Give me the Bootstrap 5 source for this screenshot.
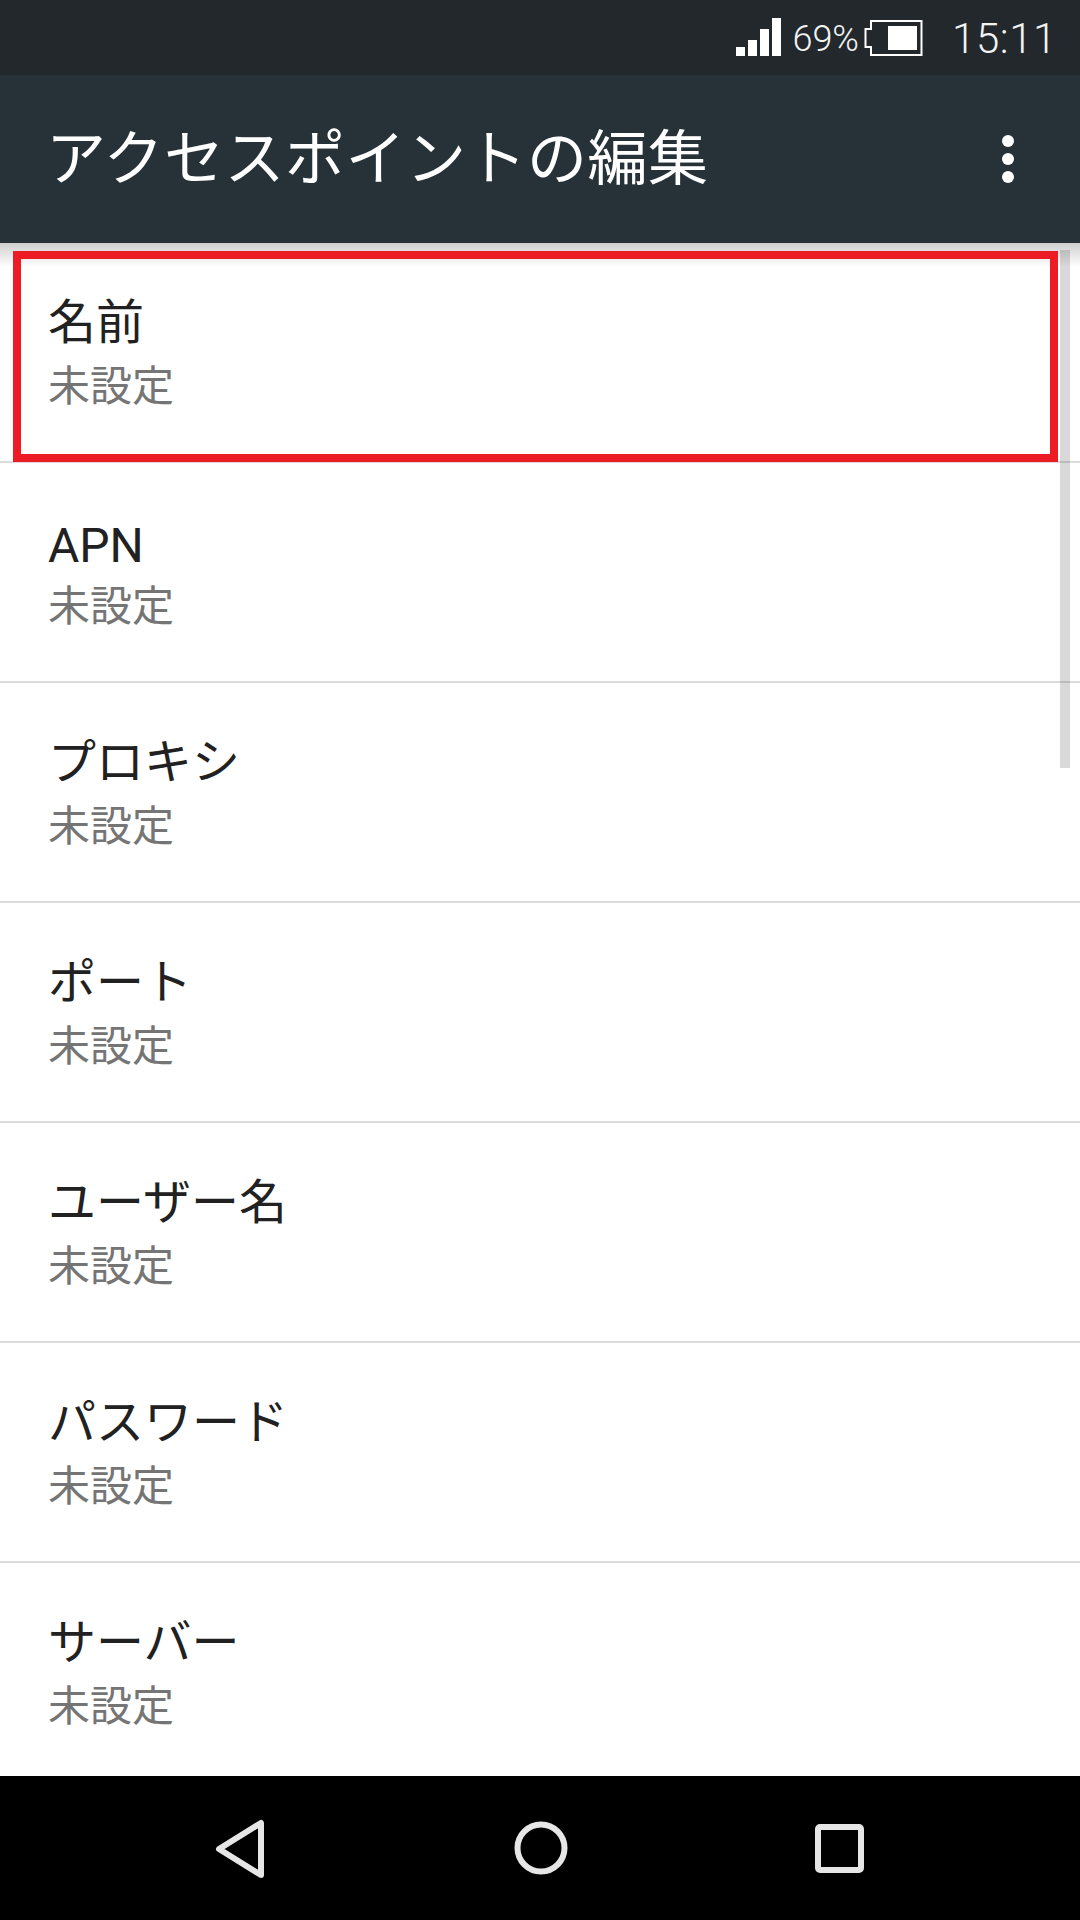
<!DOCTYPE html>
<html lang="ja">
<head>
<meta charset="utf-8">
<title>アクセスポイントの編集</title>
<link href="https://cdn.jsdelivr.net/npm/bootstrap@5.3.0/dist/css/bootstrap.min.css" rel="stylesheet">
<style>
html,body{margin:0;background:#fff}
.phone{width:1080px;height:1920px;overflow:hidden;font-family:"Roboto","Noto Sans CJK JP",sans-serif;}
.stat-bar{height:75px;background:#22282c;color:#f2f3f3;padding-right:23px}
.stat-bar svg{margin-top:1px}
.pct{font-size:36px;line-height:1;margin-left:10px;margin-right:5px;font-weight:300;padding-top:3px}
.clock{font-size:42px;line-height:1;margin-left:29px;letter-spacing:.6px;font-weight:300;padding-top:3px}
.tool-bar{height:168px;background:#263238;color:#fff;padding:0 66px 0 48px}
.tool-title{font-size:60px;font-weight:400;line-height:1;margin:-10px 0 0 -2px;letter-spacing:.5px;font-family:"Noto Sans CJK JP",sans-serif}
.dots{display:block}
.pref-list{position:relative;overflow:hidden}
.pref-list .list-group-item{height:220px;padding:47px 48px 0;border-color:#dcdcdc;border-width:0 0 2px;background:#fff}
.pref-name{font-size:48px;line-height:66px;color:#212121}
.pref-latin{height:66px;line-height:60px;padding-top:6px}
.pref-val{font-size:42px;line-height:61px;color:#757575}
.top-shade{position:absolute;left:0;right:0;top:0;height:24px;background:linear-gradient(#cfcfcf,rgba(255,255,255,0))}
.red-box{position:absolute;left:13px;top:8px;width:1045px;height:211px;border:8px solid #ed1c24}
.scroll-thumb{position:absolute;left:1060px;top:7px;width:10px;height:518px;background:rgba(0,0,0,.15)}
.nav-strip{height:144px;background:#000}
.nav-strip svg{position:absolute}
.nav-inner{position:relative;height:144px}
.ic-back{left:215px;top:43px}
.ic-home{left:513px;top:44px}
.ic-rec{left:814px;top:47px}
</style>
</head>
<body>
<div class="phone d-flex flex-column">
  <div class="stat-bar d-flex align-items-center justify-content-end flex-shrink-0">
    <svg width="46" height="40" viewBox="0 0 46 40" fill="#fff"><rect x="0" y="29" width="9" height="9"/><rect x="12" y="22" width="9" height="16"/><rect x="24" y="11" width="9" height="27"/><rect x="36" y="0" width="9" height="38"/></svg>
    <span class="pct">69%</span>
    <svg width="59" height="36" viewBox="0 0 59 36" fill="none"><path d="M7 1H57.500V35H7V27H1.500V9H7Z" stroke="#fff" stroke-width="2"/><rect x="24" y="6" width="29" height="24" fill="#fff"/></svg>
    <span class="clock">15:11</span>
  </div>
  <div class="tool-bar d-flex align-items-center justify-content-between flex-shrink-0">
    <h1 class="tool-title">アクセスポイントの編集</h1>
    <svg class="dots" width="12" height="48" viewBox="0 0 12 48" fill="#fff"><circle cx="6" cy="6" r="6"/><circle cx="6" cy="24" r="6"/><circle cx="6" cy="42" r="6"/></svg>
  </div>
  <div class="pref-list flex-grow-1">
    <div class="list-group list-group-flush">
      <div class="list-group-item"><div class="pref-name">名前</div><div class="pref-val">未設定</div></div>
      <div class="list-group-item"><div class="pref-name pref-latin">APN</div><div class="pref-val">未設定</div></div>
      <div class="list-group-item"><div class="pref-name">プロキシ</div><div class="pref-val">未設定</div></div>
      <div class="list-group-item"><div class="pref-name">ポート</div><div class="pref-val">未設定</div></div>
      <div class="list-group-item"><div class="pref-name">ユーザー名</div><div class="pref-val">未設定</div></div>
      <div class="list-group-item"><div class="pref-name">パスワード</div><div class="pref-val">未設定</div></div>
      <div class="list-group-item"><div class="pref-name">サーバー</div><div class="pref-val">未設定</div></div>
    </div>
    <div class="top-shade"></div>
    <div class="red-box"></div>
    <div class="scroll-thumb"></div>
  </div>
  <div class="nav-strip flex-shrink-0">
    <div class="nav-inner">
      <svg class="ic-back" width="54" height="60" viewBox="0 0 54 60" fill="none"><path d="M46 4 V56 L4 30 Z" stroke="#e6e6e6" stroke-width="6" stroke-linejoin="round"/></svg>
      <svg class="ic-home" width="56" height="56" viewBox="0 0 56 56" fill="none"><circle cx="28" cy="28" r="23.500" stroke="#e6e6e6" stroke-width="6"/></svg>
      <svg class="ic-rec" width="52" height="52" viewBox="0 0 52 52" fill="none"><rect x="4" y="4" width="43" height="43" rx="2" stroke="#e6e6e6" stroke-width="6"/></svg>
    </div>
  </div>
</div>
<script src="https://cdn.jsdelivr.net/npm/bootstrap@5.3.0/dist/js/bootstrap.bundle.min.js"></script>
</body>
</html>
